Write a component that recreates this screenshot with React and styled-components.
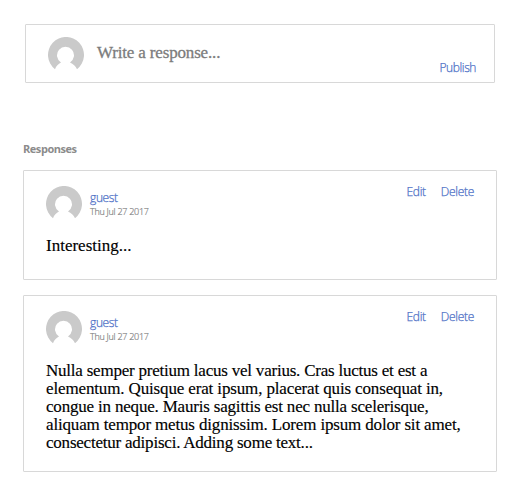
import React from "react";
import styled, { createGlobalStyle } from "styled-components";

const GlobalStyle = createGlobalStyle`
  * { box-sizing: border-box; }
  body { margin: 0; background: #fff; }
`;

const Page = styled.main`
  width: 519px;
  height: 496px;
  padding: 24px 22px 0 23px;
  background: #fff;
  font-family: "Open Sans", sans-serif;
`;

const Card = styled.section`
  border: 1px solid #d8d8d8;
  border-radius: 1px;
  background: #fff;
`;

const Composer = styled(Card)`
  display: flex;
  height: 59px;
  margin: 0 2px;
  padding: 12px 18px 0 22px;
`;

const Prompt = styled.div`
  flex: 1;
  margin: 5px 0 0 13px;
  color: #7c7c7c;
  font: 17px/22px "Liberation Serif", serif;
  letter-spacing: -0.16px;
  -webkit-text-stroke: 0.3px currentColor;
`;

const Action = styled.a`
  color: #4d70c6;
  font-size: 12px;
  font-weight: 300;
  line-height: 18px;
  letter-spacing: -0.3px;
  white-space: nowrap;
  -webkit-text-stroke: 0.25px currentColor;
`;

const Publish = styled(Action)`
  margin-top: 22px;
  letter-spacing: -0.4px;
`;

const Heading = styled.h2`
  margin: 58px 0 13px;
  color: #8b8b8b;
  font-size: 11px;
  font-weight: 700;
  line-height: 16px;
  letter-spacing: -0.45px;
`;

const Response = styled(Card)`
  width: 474px;
  height: ${(p) => p.$height}px;
  margin-bottom: 15px;
  padding: 15px 22px 0;
`;

const Header = styled.header`
  display: flex;
  height: 36px;
`;

const Author = styled.div`
  flex: 1;
  margin: 4px 0 0 8px;
`;

const Name = styled.div`
  color: #4d70c6;
  font-size: 12px;
  font-weight: 300;
  line-height: 16px;
  letter-spacing: -0.35px;
  -webkit-text-stroke: 0.25px currentColor;
`;

const DateText = styled.div`
  color: #808080;
  font-size: 9px;
  font-weight: 300;
  line-height: 11px;
  letter-spacing: -0.27px;
  white-space: nowrap;
  -webkit-text-stroke: 0.2px currentColor;
`;

const Actions = styled.nav`
  display: flex;
  gap: 15px;
  margin-top: -3px;
`;

const Body = styled.div`
  margin-top: 15px;
  color: #000;
  font: 17px/18px "Liberation Serif", serif;
  -webkit-text-stroke: 0.15px currentColor;
`;

const Line = styled.div`
  white-space: nowrap;
  letter-spacing: ${(p) => p.$tracking || 0}px;
`;

const AvatarIcon = styled.svg`
  display: block;
  flex: none;
  width: 36px;
  height: 36px;
`;

function Avatar() {
  return (
    <AvatarIcon viewBox="0 0 36 36" aria-hidden="true">
      <path
        fill="#cacaca"
        d="M7 32.2A18 18 0 1 1 29 32.2C27.6 29.2 25.2 26.8 22 25.5A8.5 8.5 0 1 0 13 25.5C10.3 26.8 8.1 29.2 7 32.2Z"
      />
    </AvatarIcon>
  );
}

const responses = [
  { height: 110, lines: [["Interesting...", 0]] },
  {
    height: 177,
    lines: [
      ["Nulla semper pretium lacus vel varius. Cras luctus et est a", -0.22],
      ["elementum. Quisque erat ipsum, placerat quis consequat in,", -0.14],
      ["congue in neque. Mauris sagittis est nec nulla scelerisque,", -0.19],
      ["aliquam tempor metus dignissim. Lorem ipsum dolor sit amet,", -0.16],
      ["consectetur adipisci. Adding some text...", -0.22],
    ],
  },
];

export default function App() {
  return (
    <Page>
      <GlobalStyle />
      <Composer>
        <Avatar />
        <Prompt>Write a response...</Prompt>
        <Publish>Publish</Publish>
      </Composer>
      <Heading>Responses</Heading>
      {responses.map((r) => (
        <Response key={r.height} $height={r.height}>
          <Header>
            <Avatar />
            <Author>
              <Name>guest</Name>
              <DateText>Thu Jul 27 2017</DateText>
            </Author>
            <Actions>
              <Action>Edit</Action>
              <Action>Delete</Action>
            </Actions>
          </Header>
          <Body>
            {r.lines.map(([text, tracking]) => (
              <Line key={text} $tracking={tracking}>{text}</Line>
            ))}
          </Body>
        </Response>
      ))}
    </Page>
  );
}
